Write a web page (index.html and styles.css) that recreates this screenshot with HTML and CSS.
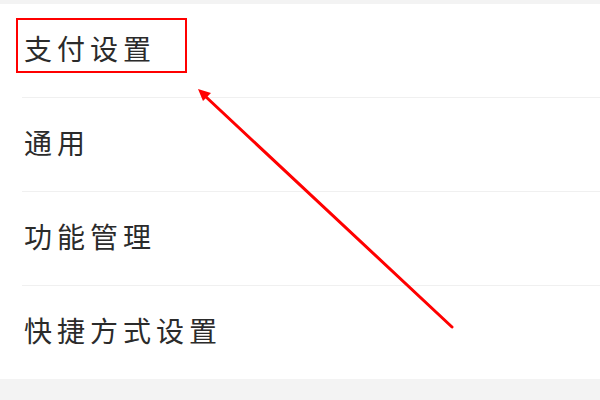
FILE: index.html
```html
<!DOCTYPE html>
<html lang="zh">
<head>
<meta charset="utf-8">
<link rel="stylesheet" href="styles.css">
</head>
<body>
<div class="page">
  <div class="list">
    <div class="row"><span class="label">支付设置</span></div>
    <div class="row"><span class="label">通用</span></div>
    <div class="row"><span class="label">功能管理</span></div>
    <div class="row last"><span class="label">快捷方式设置</span></div>
  </div>
  <div class="highlight"></div>
  <svg class="arrow" width="600" height="400" viewBox="0 0 600 400">
    <line x1="452" y1="327" x2="205" y2="96" stroke="#ff0000" stroke-width="3" stroke-linecap="round"/>
    <polygon points="198,89 211,93 203,101" fill="#ff0000"/>
  </svg>
</div>
</body>
</html>
```
FILE: styles.css
```css
html, body {
  margin: 0;
  padding: 0;
}
body {
  width: 600px;
  height: 400px;
  background: #f3f3f3;
  font-family: "Noto Sans CJK SC", sans-serif;
  overflow: hidden;
}
.page {
  position: relative;
  width: 600px;
  height: 400px;
  padding-top: 4px;
  box-sizing: border-box;
}
.list {
  background: #ffffff;
  padding-left: 22px;
}
.row {
  height: 94px;
  box-sizing: border-box;
  padding-bottom: 5px;
  border-bottom: 1px solid #f0f0f0;
  display: flex;
  align-items: center;
}
.row.last {
  border-bottom: none;
  height: 93px;
}
.label {
  font-size: 28px;
  letter-spacing: 5px;
  color: #2b2b2b;
  padding-left: 2px;
  font-weight: 400;
}
.highlight {
  position: absolute;
  left: 16px;
  top: 18px;
  width: 167px;
  height: 51px;
  border: 2px solid #ff0000;
}
.arrow {
  position: absolute;
  left: 0;
  top: 0;
}
```
